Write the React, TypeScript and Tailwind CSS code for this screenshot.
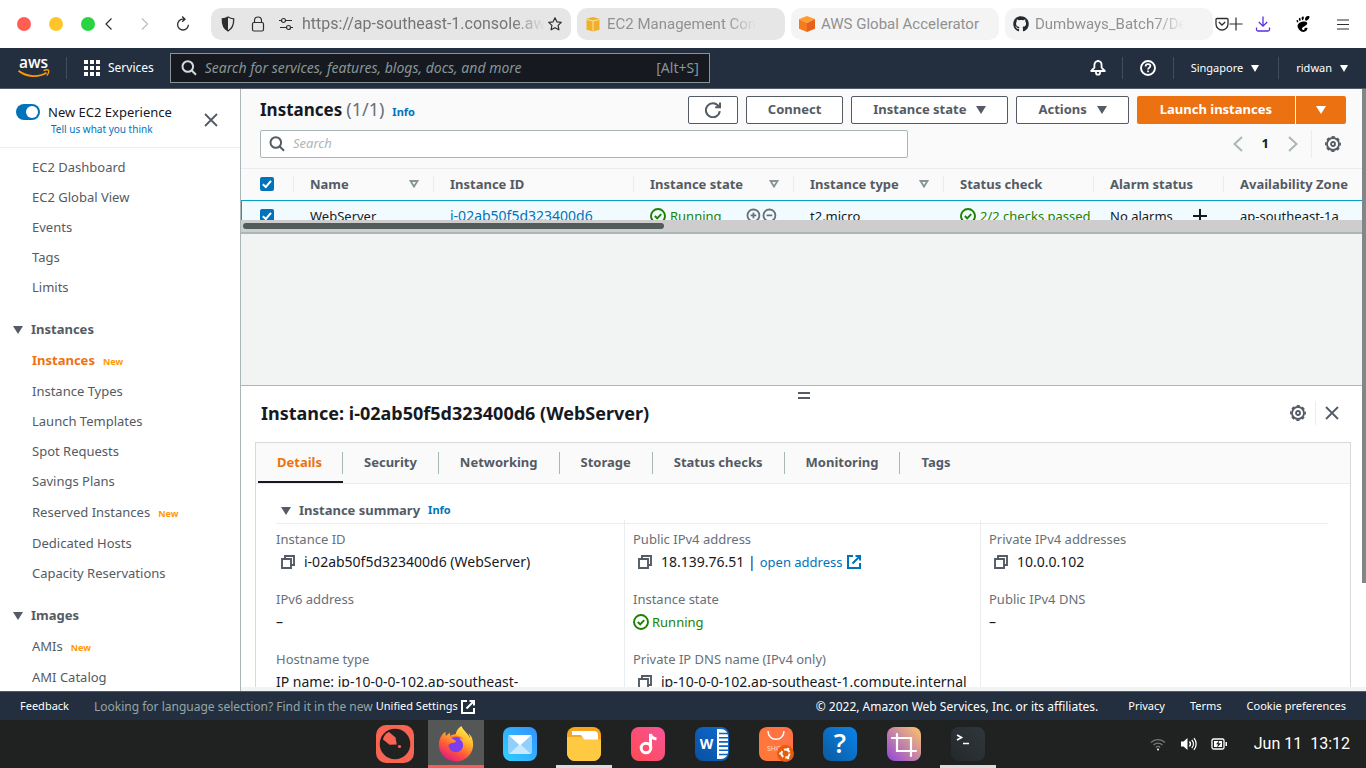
import type { ReactNode } from "react";
import { FaFirefoxBrowser, FaGithub } from "react-icons/fa";
import { SiGnome } from "react-icons/si";

/* ---------- Icons ---------- */

function Caret({ className = "h-2 w-2.5" }: { className?: string }) {
  return (
    <svg viewBox="0 0 10 8" preserveAspectRatio="none" className={"shrink-0 fill-current " + className} aria-hidden="true">
      <path d="M0 0h10L5 8z" />
    </svg>
  );
}

function SortIcon() {
  return (
    <svg viewBox="0 0 10 8" className="h-2 w-2.5 shrink-0 text-[#879596]" aria-hidden="true">
      <path d="M1.5 1h7L5 6.6z" fill="none" stroke="currentColor" strokeWidth="1.8" />
    </svg>
  );
}

function SearchIcon({ className = "" }: { className?: string }) {
  return (
    <svg viewBox="0 0 16 16" className={"size-4 shrink-0 " + className} fill="none" stroke="currentColor" strokeWidth="2" aria-hidden="true">
      <circle cx="6.800" cy="6.500" r="5.300" />
      <path d="M10.500 10.200 15 14.700" />
    </svg>
  );
}

function CloseIcon() {
  return (
    <svg viewBox="0 0 16 16" className="size-4" fill="none" stroke="currentColor" strokeWidth="1.8" aria-hidden="true">
      <path d="m2 2 12 12M14 2 2 14" />
    </svg>
  );
}

function GearIcon() {
  return (
    <svg viewBox="0 0 16 16" className="size-4" fill="none" stroke="currentColor" aria-hidden="true">
      <circle cx="8" cy="8" r="2" strokeWidth="1.8" />
      <circle cx="8" cy="8" r="6" strokeWidth="1.8" />
      <circle cx="8" cy="8" r="7.200" strokeWidth="1.500" strokeDasharray="3.200 2.455" strokeDashoffset="1.600" />
    </svg>
  );
}

function CopyIcon() {
  return (
    <svg viewBox="0 0 16 16" className="size-4 shrink-0 text-[#545b64]" fill="none" stroke="currentColor" strokeWidth="1.900" aria-hidden="true">
      <path d="M2 5h9v9H2z" />
      <path d="M5 5V2h9v9h-3" />
    </svg>
  );
}

function ExternalIcon() {
  return (
    <svg viewBox="0 0 16 16" className="size-4 shrink-0" fill="none" stroke="currentColor" strokeWidth="2" aria-hidden="true">
      <path d="M7 2H2v12h12V9" />
      <path d="M9.5 2H14v4.5M14 2 6.5 9.5" />
    </svg>
  );
}

function OkIcon() {
  return (
    <svg viewBox="0 0 16 16" className="size-4 shrink-0" fill="none" stroke="currentColor" strokeWidth="1.9" aria-hidden="true">
      <circle cx="8" cy="8" r="7" />
      <path d="m4.8 8 2.4 2.3 4-4.2" />
    </svg>
  );
}

function ZoomIcon({ plus }: { plus?: boolean }) {
  return (
    <svg viewBox="0 0 14 14" className="size-4 text-[#687078]" fill="none" stroke="currentColor" strokeWidth="1.600" aria-hidden="true">
      <circle cx="6.5" cy="6.5" r="5.2" />
      <path d="M10.500 10.500 13.500 13.500M4 6.500h5" />
      {plus && <path d="M6.500 4v5" />}
    </svg>
  );
}

/* ---------- Browser window bar ---------- */

function WindowDot({ className, label }: { className: string; label: string }) {
  return <button type="button" aria-label={label} className={"size-3.5 rounded-full " + className} />;
}

const fade = "[mask-image:linear-gradient(to_right,#000_78%,transparent_97%)]";

function BrowserTab({ icon, title, active, faded }: { icon: ReactNode; title: string; active?: boolean; faded?: boolean }) {
  return (
    <button
      type="button"
      className={
        "flex h-8 min-w-0 items-center gap-1.5 rounded-[10px] pr-6 pl-2 text-left text-[15px] text-[#919191] " +
        (active ? "bg-[#e6e6e6]" : "bg-[#f4f4f4]")
      }
    >
      {icon}
      <span className={"min-w-0 flex-1 whitespace-nowrap " + (faded ? fade : "")}>{title}</span>
    </button>
  );
}

function BrowserBar() {
  return (
    <header className="flex h-12 shrink-0 items-center bg-white font-['Roboto',sans-serif] text-[#2e2e2e]">
      <div className="flex w-[211px] shrink-0 items-center pl-[17px]">
        <div className="flex gap-[18px]">
          <WindowDot label="Close window" className="bg-[#ff5f52]" />
          <WindowDot label="Minimise window" className="bg-[#ffc52b]" />
          <WindowDot label="Maximise window" className="bg-[#28d43f]" />
        </div>
        <button type="button" aria-label="Back" className="ml-1.5">
          <svg viewBox="0 0 16 16" className="size-4" fill="none" stroke="currentColor" strokeWidth="1.2"><path d="M10.5 2.5 5 8l5.5 5.5" /></svg>
        </button>
        <button type="button" aria-label="Forward" className="ml-5 text-[#bdbdbd]">
          <svg viewBox="0 0 16 16" className="size-4" fill="none" stroke="currentColor" strokeWidth="1.2"><path d="M5 2.5 10.5 8 5 13.5" /></svg>
        </button>
        <button type="button" aria-label="Reload" className="ml-[22px]">
          <svg viewBox="0 0 16 16" className="size-4" fill="none" stroke="currentColor" strokeWidth="1.3">
            <path d="M9.5 3.2H7.6a5.4 5.4 0 1 0 5.8 5.600M7.200.600l2.800 2.600-2.800 2.600" />
          </svg>
        </button>
      </div>

      <div className="grid min-w-0 flex-1 grid-cols-[360fr_208fr_208fr_208fr] gap-1.5">
        <div className="flex h-8 min-w-0 items-center rounded-[10px] bg-[#e6e6e6] pr-2 pl-[9px]">
          <svg viewBox="0 0 16 16" className="size-4 shrink-0" aria-hidden="true">
            <path d="M8 1c2 1.200 4 1.700 5.700 1.800C13.900 8.500 12 12.800 8 15 4 12.800 2.100 8.500 2.300 2.800 4 2.700 6 2.200 8 1z" fill="none" stroke="currentColor" strokeWidth="1.3" />
            <path d="M8 1v14C4 12.800 2.100 8.500 2.300 2.800 4 2.700 6 2.200 8 1z" fill="currentColor" />
          </svg>
          <svg viewBox="0 0 16 16" className="ml-3.5 size-4 shrink-0" fill="none" stroke="currentColor" strokeWidth="1.200" aria-hidden="true">
            <rect x="2.500" y="6.500" width="11" height="8.500" rx="1.500" />
            <path d="M4.500 6.500V4.500a3.500 3.500 0 0 1 7 0v2" />
          </svg>
          <svg viewBox="0 0 16 16" className="ml-3 size-4 shrink-0" fill="none" stroke="currentColor" strokeWidth="1.200" aria-hidden="true">
            <path d="M1 4.500h2.500M7.500 4.500H14M2 11.500h6.500M12.500 11.500H15" />
            <circle cx="5.500" cy="4.500" r="2" />
            <circle cx="10.500" cy="11.500" r="2" />
          </svg>
          <input
            aria-label="Address"
            readOnly
            value="https://ap-southeast-1.console.aws"
            className="ml-2 min-w-0 flex-1 bg-transparent text-[16px] text-[#757575] outline-none [mask-image:linear-gradient(to_right,#000_86%,transparent_99%)]"
          />
          <button type="button" aria-label="Bookmark this page">
            <svg viewBox="0 0 16 16" className="size-4" fill="none" stroke="currentColor" strokeWidth="1.200" strokeLinejoin="round">
              <path d="m8 1.800 1.900 4 4.400.6-3.200 3 .8 4.400L8 11.700l-3.900 2.100.8-4.400-3.200-3 4.400-.6z" />
            </svg>
          </button>
        </div>

        <BrowserTab
          active
          faded
          title="EC2 Management Cons"
          icon={
            <svg viewBox="0 0 16 16" className="size-4 shrink-0" aria-hidden="true">
              <path d="m8 1 6.500 1.800v11L8 15.500l-6.500-1.700v-11z" fill="#f0b02a" />
              <path d="M1.500 3.400 8 5l6.500-1.600M8 5v10.500" stroke="#fae3a8" fill="none" />
            </svg>
          }
        />
        <BrowserTab
          title="AWS Global Accelerator"
          icon={
            <svg viewBox="0 0 16 16" className="size-4 shrink-0" aria-hidden="true">
              <path d="m8 0 8 3-8 4-8-4z" fill="#ff9d2e" />
              <path d="m0 3 8 4v9l-8-3.200z" fill="#f47b20" />
              <path d="m16 3-8 4v9l8-3.200z" fill="#e8601c" />
            </svg>
          }
        />
        <BrowserTab faded title="Dumbways_Batch7/Dev" icon={<FaGithub className="size-4 shrink-0 text-[#24292f]" />} />
      </div>

      <div className="flex w-[153px] shrink-0 items-center pl-0.5">
        <button type="button" aria-label="Save to Pocket">
          <svg viewBox="0 0 14 14" className="size-3.5" fill="none" stroke="currentColor" strokeWidth="1.300">
            <path d="M2 1.500h10a1 1 0 0 1 1 1V7A6 6 0 0 1 1 7V2.500a1 1 0 0 1 1-1z" />
            <path d="m3.800 5 3.200 3 3.200-3" />
          </svg>
        </button>
        <button type="button" aria-label="New tab">
          <svg viewBox="0 0 14 14" className="size-3.5" stroke="currentColor" strokeWidth="1.200"><path d="M7 .5v13M.5 7h13" /></svg>
        </button>
        <button type="button" aria-label="Downloads" className="ml-3 text-[#5b2ee0]">
          <svg viewBox="0 0 16 16" className="size-4" fill="none" stroke="currentColor" strokeWidth="1.300">
            <path d="M8 .5v9.500M3.800 6 8 10.200 12.200 6M1.500 11.500v2a1.500 1.500 0 0 0 1.500 1.500h10a1.500 1.500 0 0 0 1.500-1.500v-2" />
          </svg>
        </button>
        <button type="button" aria-label="GNOME extension" className="ml-6 text-black">
          <SiGnome className="size-4" />
        </button>
        <button type="button" aria-label="Open menu" className="ml-6">
          <svg viewBox="0 0 16 16" className="size-4" stroke="currentColor" strokeWidth="1.200"><path d="M2 4h12M2 8.500h12M2 13h12" /></svg>
        </button>
      </div>
    </header>
  );
}

/* ---------- AWS navigation ---------- */

function NavDivider() {
  return <span className="h-[22px] w-px bg-[#414d5c]" />;
}

function AwsNav() {
  return (
    <nav className="flex h-[41px] shrink-0 items-center border-b border-[#545b64] bg-[#232f3e] text-xs text-white">
      <a href="#home" aria-label="AWS home" className="ml-[18px]">
        <svg viewBox="0 0 32 22" className="h-[22px] w-8 overflow-visible">
          <text x="15.500" y="10.500" textAnchor="middle" fontFamily="'Open Sans', sans-serif" fontWeight="600" fontSize="15.500" fill="#fff">aws</text>
          <path d="M.5 13.800c8.500 6.600 20 6.800 28 2" fill="none" stroke="#f90" strokeWidth="1.900" />
          <path d="M25.500 13.600c2-.8 4.600-.9 5.200-.2.500.8-.4 3.600-2 5.200" fill="none" stroke="#f90" strokeWidth="1.300" />
        </svg>
      </a>
      <div className="ml-4 flex items-center gap-[17px]">
        <NavDivider />
        <button type="button" className="flex items-center gap-2">
          <svg viewBox="0 0 16 16" className="size-4" fill="currentColor" aria-hidden="true">
            {[0, 6, 12].map((y) => [0, 6, 12].map((x) => <rect key={`${x}-${y}`} x={x} y={y} width="4" height="4" />))}
          </svg>
          Services
        </button>
      </div>
      <label className="ml-4 flex h-[30px] w-[540px] items-center gap-2 border border-[#879596] bg-[#16191f] px-2.5">
        <SearchIcon className="text-[#d5dbdb]" />
        <input
          aria-label="Search services"
          placeholder="Search for services, features, blogs, docs, and more"
          className="min-w-0 flex-1 bg-transparent text-sm outline-none placeholder:text-[#879596] placeholder:italic"
        />
        <span className="text-sm text-[#879596]">[Alt+S]</span>
      </label>
      <div className="ml-auto flex items-center pr-[18px] text-[11px]">
        <button type="button" aria-label="Notifications" className="mr-4">
          <svg viewBox="0 0 16 16" className="size-4" fill="none" stroke="currentColor" strokeWidth="1.800" strokeLinejoin="round">
            <path d="M8 1.200c2.300 0 3.600 1.700 3.600 4v2.500L14.800 11H1.200l3.200-3.300V5.200c0-2.300 1.300-4 3.600-4zM6 11.500v1.200a2 2 0 0 0 4 0v-1.200M8 0v1.500" />
          </svg>
        </button>
        <NavDivider />
        <button type="button" aria-label="Help" className="mx-[17px]">
          <svg viewBox="0 0 16 16" className="size-4" fill="none" stroke="currentColor" strokeWidth="1.900">
            <circle cx="8" cy="8" r="7" />
            <path d="M5.600 6.400c0-1.500 1-2.300 2.400-2.300s2.400.8 2.400 2c0 1.700-2.400 1.600-2.400 3.400M8 10.500v1.700" strokeWidth="1.700" />
          </svg>
        </button>
        <NavDivider />
        <button type="button" className="mr-[19px] ml-[17px] flex items-center gap-2">Singapore <Caret className="h-[7px] w-2" /></button>
        <NavDivider />
        <button type="button" className="ml-[17px] flex items-center gap-2">ridwan <Caret className="h-[7px] w-2" /></button>
      </div>
    </nav>
  );
}

/* ---------- Sidebar ---------- */

type Item = { label: string; isNew?: boolean; current?: boolean };

function SideItems({ items }: { items: Item[] }) {
  return (
    <ul>
      {items.map((item) => (
        <li key={item.label} className={"flex items-center gap-2 pl-8 " + (item.isNew ? "h-8" : "h-[30px]")}>
          <a href="#nav" className={item.current ? "font-bold text-[#ec7211]" : "text-[#545b64]"}>{item.label}</a>
          {item.isNew && <span className="pt-0.5 text-[9px] font-bold text-[#ff9900]">New</span>}
        </li>
      ))}
    </ul>
  );
}

function SideSection({ title, items }: { title: string; items: Item[] }) {
  return (
    <section>
      <h2 className="pt-3">
        <button type="button" className="flex h-[30px] items-center gap-2 pl-[13px] font-bold text-[#545b64]">
          <Caret /> {title}
        </button>
      </h2>
      <SideItems items={items} />
    </section>
  );
}

function Sidebar() {
  return (
    <aside className="flex w-[241px] shrink-0 flex-col overflow-hidden border-r border-[#aab7b8] bg-white">
      <div className="flex h-[59px] shrink-0 items-start border-b border-[#eaeded] pt-[15px] pl-4">
        <label className="relative flex cursor-pointer">
          <input type="checkbox" role="switch" defaultChecked aria-label="New EC2 Experience" className="peer h-4 w-6 appearance-none rounded-full bg-[#0073bb]" />
          <span className="pointer-events-none absolute top-0.5 right-0.5 size-3 rounded-full bg-white" />
        </label>
        <div className="ml-2 flex flex-col">
          <span className="leading-4 text-[#16191f]">New EC2 Experience</span>
          <a href="#feedback" className="pl-[3px] text-[10px] leading-[18px] text-[#0073bb]">Tell us what you think</a>
        </div>
        <button type="button" aria-label="Close navigation" className="mt-2 ml-auto mr-[21px] text-[#545b64]"><CloseIcon /></button>
      </div>
      <div className="min-h-0 flex-1 overflow-hidden pt-[5px]">
        <SideItems items={[{ label: "EC2 Dashboard" }, { label: "EC2 Global View" }, { label: "Events" }, { label: "Tags" }, { label: "Limits" }]} />
        <SideSection
          title="Instances"
          items={[
            { label: "Instances", isNew: true, current: true },
            { label: "Instance Types" },
            { label: "Launch Templates" },
            { label: "Spot Requests" },
            { label: "Savings Plans" },
            { label: "Reserved Instances", isNew: true },
            { label: "Dedicated Hosts" },
            { label: "Capacity Reservations" },
          ]}
        />
        <SideSection title="Images" items={[{ label: "AMIs", isNew: true }, { label: "AMI Catalog" }]} />
      </div>
    </aside>
  );
}

/* ---------- Instances table ---------- */

function Check({ label }: { label: string }) {
  return (
    <label className="relative ml-[19px] flex size-3.5">
      <input type="checkbox" defaultChecked aria-label={label} className="size-3.5 appearance-none rounded-[2px] bg-[#0073bb]" />
      <svg viewBox="0 0 14 14" className="pointer-events-none absolute inset-0 size-3.5" fill="none" stroke="#fff" strokeWidth="2" aria-hidden="true">
        <path d="m2.800 7.200 3 2.800 5.200-6.200" />
      </svg>
    </label>
  );
}

function Button({ children, wide }: { children: ReactNode; wide?: boolean }) {
  return (
    <button type="button" className={"flex h-7 items-center gap-2.5 rounded-[2px] border border-[#545b64] bg-white font-bold text-[#545b64] " + (wide ? "px-[21px]" : "px-4")}>
      {children}
    </button>
  );
}

const columns = [
  { label: "Name", width: "w-[140px]", sort: true },
  { label: "Instance ID", width: "w-[200px]" },
  { label: "Instance state", width: "w-[160px]", sort: true },
  { label: "Instance type", width: "w-[150px]", sort: true },
  { label: "Status check", width: "w-[150px]" },
  { label: "Alarm status", width: "w-[130px]" },
  { label: "Availability Zone", width: "w-[160px]" },
];

function InstancesTable() {
  return (
    <section className="bg-[#fafafa] pt-[7px]">
      <div className="flex h-7 items-center gap-2 pr-5 pl-[19px]">
        <h1 className="flex flex-1 items-baseline text-[17px] leading-7 font-bold text-[#16191f]">
          Instances <span className="ml-1 text-[18px] font-normal text-[#687078]">(1/1)</span>
          <a href="#info" className="ml-2 text-[11px] text-[#0073bb]">Info</a>
        </h1>
        <Button>
          <svg viewBox="0 0 16 16" className="size-4" fill="none" stroke="currentColor" strokeWidth="2" aria-label="Refresh">
            <path d="M14.800 9.200A7 7 0 1 1 13.600 4.200M15 .5V5.300h-4.800" />
          </svg>
        </Button>
        <Button wide>Connect</Button>
        <Button wide>Instance state <Caret /></Button>
        <Button wide>Actions <Caret /></Button>
        <div className="flex gap-px">
          <button type="button" className="h-7 rounded-l-[2px] bg-[#ec7211] px-[23px] font-bold text-white">Launch instances</button>
          <button type="button" aria-label="More launch options" className="flex h-7 w-[50px] items-center justify-center rounded-r-[2px] bg-[#ec7211] text-white"><Caret /></button>
        </div>
      </div>

      <div className="mt-1.5 flex items-center justify-between pr-5 pl-[19px]">
        <label className="flex h-7 w-[648px] items-center gap-2 rounded-[2px] border border-[#aab7b8] bg-white px-2">
          <SearchIcon className="text-[#545b64]" />
          <input aria-label="Search instances" placeholder="Search" className="min-w-0 flex-1 bg-transparent outline-none placeholder:text-[#aab7b8] placeholder:italic" />
        </label>
        <div className="flex items-center">
          <button type="button" aria-label="Previous page" className="text-[#aab7b8]">
            <svg viewBox="0 0 16 16" className="size-4" fill="none" stroke="currentColor" strokeWidth="2"><path d="M12 1 4.500 8l7.500 7" /></svg>
          </button>
          <span className="mx-4 font-bold text-[#16191f]">1</span>
          <button type="button" aria-label="Next page" className="text-[#aab7b8]">
            <svg viewBox="0 0 16 16" className="size-4" fill="none" stroke="currentColor" strokeWidth="2"><path d="m4 1 7.500 7L4 15" /></svg>
          </button>
          <span className="mr-[13px] ml-2.5 h-7 w-px bg-[#eaeded]" />
          <button type="button" aria-label="Preferences" className="mr-[5px] text-[#545b64]"><GearIcon /></button>
        </div>
      </div>

      <div className="mt-2.5 h-[52px] overflow-hidden border-t border-[#eaeded]">
        <table className="w-[1143px] table-fixed border-collapse text-left whitespace-nowrap">
          <thead>
            <tr className="h-[31px] text-[#545b64]">
              <th className="w-[53px] p-0">
                <div className="flex h-4 items-center border-r border-[#eaeded]"><Check label="Select all" /></div>
              </th>
              {columns.map((c) => (
                <th key={c.label} className={"p-0 font-bold " + c.width}>
                  <div className="flex h-4 items-center justify-between border-r border-[#eaeded] pr-3.5 pl-4">
                    {c.label}
                    {c.sort && <SortIcon />}
                  </div>
                </th>
              ))}
            </tr>
          </thead>
          <tbody>
            <tr className="h-8 border-t border-[#00a1c9] bg-[#f1faff] text-[#16191f] shadow-[inset_1px_0_#00a1c9]">
              <td className="p-0"><Check label="Select WebServer" /></td>
              <td className="p-0 pl-4">WebServer</td>
              <td className="p-0 pl-4"><a href="#instance" className="text-sm text-[#0073bb]">i-02ab50f5d323400d6</a></td>
              <td className="p-0 pl-4">
                <div className="flex items-center">
                  <span className="flex items-center gap-1 text-[#1d8102]"><OkIcon /> Running</span>
                  <button type="button" aria-label="Filter for value" className="ml-6"><ZoomIcon plus /></button>
                  <button type="button" aria-label="Filter out value"><ZoomIcon /></button>
                </div>
              </td>
              <td className="p-0 pl-4">t2.micro</td>
              <td className="p-0 pl-4">
                <span className="flex items-center gap-1 text-[#1d8102]"><OkIcon /> 2/2 checks passed</span>
              </td>
              <td className="p-0 pl-4">
                <div className="flex items-center gap-5">
                  No alarms
                  <button type="button" aria-label="Add alarm">
                    <svg viewBox="0 0 14 14" className="size-3.5" stroke="currentColor" strokeWidth="2"><path d="M7 0v14M0 7h14" /></svg>
                  </button>
                </div>
              </td>
              <td className="p-0 pl-4">ap-southeast-1a</td>
            </tr>
          </tbody>
        </table>
      </div>
      <div className="h-[14px] border-b-2 border-[#aab7b8] bg-[#cdcdcd] px-0.5 pt-[3px]">
        <div className="h-1.5 w-[37.6%] rounded-full bg-[#545b5b]" />
      </div>
    </section>
  );
}

/* ---------- Detail panel ---------- */

const tabs = ["Details", "Security", "Networking", "Storage", "Status checks", "Monitoring", "Tags"];

function Field({ label, children }: { label: string; children: ReactNode }) {
  return (
    <div className="h-[60px]">
      <dt className="leading-[22px] text-[#687078]">{label}</dt>
      <dd className="flex h-6 items-center text-sm whitespace-nowrap text-[#16191f]">{children}</dd>
    </div>
  );
}

function Copyable({ children }: { children: ReactNode }) {
  return (
    <span className="flex items-center gap-2 pl-1">
      <button type="button" aria-label="Copy"><CopyIcon /></button>
      <span className="flex items-center gap-1">{children}</span>
    </span>
  );
}

function DetailPanel() {
  return (
    <section className="relative flex h-[306px] shrink-0 flex-col border-t border-[#aab7b8] bg-white">
      <button type="button" aria-label="Resize panel" className="absolute top-1 left-1/2 -translate-x-1/2 text-[#545b64]">
        <svg viewBox="0 0 12 12" className="size-3" stroke="currentColor" strokeWidth="2"><path d="M0 3h12M0 8h12" /></svg>
      </button>
      <header className="flex h-14 shrink-0 items-center pr-[26px] pb-0.5 pl-5">
        <h2 className="flex-1 text-[18px] font-bold text-[#16191f]">Instance: i-02ab50f5d323400d6 (WebServer)</h2>
        <button type="button" aria-label="Panel preferences" className="mr-[9px] text-[#545b64]"><GearIcon /></button>
        <span className="h-6 w-px bg-[#eaeded]" />
        <button type="button" aria-label="Close panel" className="ml-2 text-[#545b64]"><CloseIcon /></button>
      </header>
      <div className="mr-[15px] ml-3.5 flex min-h-0 flex-1 flex-col overflow-hidden border-x border-t border-[#d5dbdb]">
        <div role="tablist" className="flex h-[41px] shrink-0 items-stretch border-b border-[#eaeded] bg-[#fafafa] pl-0.5">
          {tabs.map((tab, i) => (
            <button
              key={tab}
              type="button"
              role="tab"
              aria-selected={i === 0}
              className={"flex items-center border-y-2 border-t-transparent font-bold " + (i === 0 ? "border-b-[#16191f] text-[#ec7211]" : "border-b-transparent text-[#545b64]")}
            >
              <span
                className={
                  "flex h-[22px] items-center " +
                  (i === 0 ? "pr-5 pl-[19px] " : "px-[21px] ") +
                  (i < tabs.length - 1 ? "border-r border-[#aab7b8]" : "")
                }
              >
                {tab}
              </span>
            </button>
          ))}
        </div>
        <div className="flex min-h-0 flex-1 flex-col overflow-hidden pt-4 pr-[22px] pl-5">
          <h3 className="flex h-6 shrink-0 items-center border-b border-[#eaeded] pb-0.5 pl-[5px] font-bold text-[#545b64]">
            <button type="button" className="flex items-center gap-2"><Caret /> Instance summary</button>
            <a href="#info" className="ml-2 text-[11px] text-[#0073bb]">Info</a>
          </h3>
          <dl className="-mx-2 -mt-1 grid grid-cols-3">
            <div className="px-2 pt-2">
              <Field label="Instance ID"><Copyable>i-02ab50f5d323400d6 (WebServer)</Copyable></Field>
              <Field label="IPv6 address">–</Field>
              <Field label="Hostname type">IP name: ip-10-0-0-102.ap-southeast-</Field>
            </div>
            <div className="border-l border-[#eaeded] px-2 pt-2">
              <Field label="Public IPv4 address">
                <Copyable>
                  18.139.76.51 | <a href="#open" className="flex items-center gap-1 text-[13px] text-[#0073bb]">open address <ExternalIcon /></a>
                </Copyable>
              </Field>
              <Field label="Instance state"><span className="flex items-center gap-[3px] text-[13px] text-[#1d8102]"><OkIcon /> Running</span></Field>
              <Field label="Private IP DNS name (IPv4 only)"><Copyable>ip-10-0-0-102.ap-southeast-1.compute.internal</Copyable></Field>
            </div>
            <div className="border-l border-[#eaeded] px-2 pt-2">
              <Field label="Private IPv4 addresses"><Copyable>10.0.0.102</Copyable></Field>
              <Field label="Public IPv4 DNS">–</Field>
            </div>
          </dl>
        </div>
      </div>
      <div className="h-1 shrink-0 bg-[#f2f3f3]" />
    </section>
  );
}

/* ---------- Footer and dock ---------- */

function ConsoleFooter() {
  return (
    <footer className="flex h-[29px] shrink-0 items-center border-t border-[#545b64] bg-[#232f3e] px-5 pt-px text-[11px] whitespace-nowrap text-white">
      <a href="#feedback">Feedback</a>
      <p className="ml-[25px] flex items-center gap-[3px] text-xs text-[#95a5a6]">
        Looking for language selection? Find it in the new
        <a href="#settings" className="flex items-center gap-0.5 text-[11px] text-white">Unified Settings <ExternalIcon /></a>
      </p>
      <p className="ml-auto text-xs">© 2022, Amazon Web Services, Inc. or its affiliates.</p>
      <a href="#privacy" className="ml-[30px]">Privacy</a>
      <a href="#terms" className="ml-[25px]">Terms</a>
      <a href="#cookies" className="ml-[25px]">Cookie preferences</a>
    </footer>
  );
}

function DockItem({ label, className = "w-14", bar, children }: { label: string; className?: string; bar?: string; children: ReactNode }) {
  return (
    <button type="button" aria-label={label} className={"relative flex h-12 items-center justify-center " + className}>
      {children}
      {bar && <span className={"absolute inset-x-0 bottom-0 h-[3px] " + bar} />}
    </button>
  );
}

function Tile({ from, to, id, children }: { from: string; to: string; id: string; children: ReactNode }) {
  return (
    <svg viewBox="0 0 36 36" className="size-9">
      <defs>
        <linearGradient id={id} x1="0" y1="1" x2="1" y2="0">
          <stop offset="0" stopColor={from} />
          <stop offset="1" stopColor={to} />
        </linearGradient>
      </defs>
      <rect x="1" y="1" width="34" height="34" rx="8" fill={`url(#${id})`} />
      {children}
    </svg>
  );
}

function Dock() {
  return (
    <div className="grid h-12 shrink-0 grid-cols-[1fr_auto_1fr] bg-[#202121] font-['Roboto',sans-serif] text-white">
      <div />
      <div className="flex gap-2">
        <DockItem label="Activities" className="w-[50px]">
          <svg viewBox="0 0 38 38" className="size-[38px]">
            <rect width="38" height="38" rx="10" fill="#f96352" />
            <circle cx="19" cy="19" r="15.300" fill="#202121" />
            <path d="M7 14.500Q8 9 13 7l6.500 5.500 1.300 7-7.300.300z" fill="#f96352" />
            <circle cx="23.500" cy="21.500" r="1.600" fill="#f96352" />
          </svg>
        </DockItem>
        <DockItem label="Firefox" className="w-14 bg-[#555656]" bar="bg-[#f65d55]">
          <svg viewBox="0 0 36 36" className="size-9">
            <defs>
              <linearGradient id="fox" x1=".8" y1="0" x2=".25" y2="1">
                <stop offset="0" stopColor="#fff44f" />
                <stop offset=".35" stopColor="#ffb52e" />
                <stop offset=".65" stopColor="#ff5a36" />
                <stop offset="1" stopColor="#e31587" />
              </linearGradient>
            </defs>
            <circle cx="18" cy="20" r="12" fill="#ff7a2d" />
            <circle cx="18" cy="19" r="8" fill="#7b3ff0" />
            <FaFirefoxBrowser x="0" y="0" size={36} style={{ fill: "url(#fox)" }} />
          </svg>
        </DockItem>
        <DockItem label="Mail">
          <Tile id="mail" from="#2fd0ff" to="#3391ff">
            <rect x="6" y="9" width="24" height="19" rx="2" fill="#8fd0ff" />
            <path d="m7 28 11-10 11 10z" fill="#c9e9ff" />
            <path d="M6.500 9h23L18 19.500z" fill="#fff" />
          </Tile>
        </DockItem>
        <DockItem label="Files" bar="bg-[#dcdcdc]">
          <Tile id="files" from="#f9a825" to="#f6a51c">
            <path d="M6 5h22a4 4 0 0 1 4 4v6H19l-4-6H6z" fill="#fff" />
            <path d="M1 11h12c4 0 3 2.500 7 2.500h15V27a8 8 0 0 1-8 8H9a8 8 0 0 1-8-8z" fill="#ffca41" />
          </Tile>
        </DockItem>
        <DockItem label="Music">
          <Tile id="music" from="#ff4a50" to="#f7549c">
            <circle cx="16" cy="22" r="4.800" fill="none" stroke="#fff" strokeWidth="3" />
            <path d="M20.500 22V8c.5 3 2 4.500 6 5" fill="none" stroke="#fff" strokeWidth="3" />
          </Tile>
        </DockItem>
        <DockItem label="Writer">
          <Tile id="word" from="#0a4fa0" to="#0d6ed1">
            <path d="M23 3h4a7 7 0 0 1 7 7v16a7 7 0 0 1-7 7h-4z" fill="#fff" />
            <path d="M25 7.500h9M25 11.700h9M25 15.900h9M25 20.100h9M25 24.300h9M25 28.500h9" stroke="#0d63bf" strokeWidth="1.600" />
            <text x="12.500" y="23" textAnchor="middle" fontFamily="'Open Sans', sans-serif" fontWeight="700" fontSize="14" fill="#fff">W</text>
          </Tile>
        </DockItem>
        <DockItem label="Software">
          <Tile id="shop" from="#ff7a36" to="#ff7048">
            <path d="M10 5c0 11 16 11 16 0" fill="none" stroke="#fff" strokeWidth="1.500" />
            <text x="9" y="25" fontFamily="'Open Sans', sans-serif" fontSize="7" fill="#ffe0d0">SHOP</text>
            <circle cx="27.500" cy="27.500" r="8.500" fill="#ea5a0b" />
            <circle cx="27.500" cy="27.500" r="4" fill="none" stroke="#fff" strokeWidth="2" strokeDasharray="6.400 2" />
            <circle cx="22.500" cy="27.500" r="1.300" fill="#fff" />
            <circle cx="30" cy="23" r="1.300" fill="#fff" />
            <circle cx="30" cy="32" r="1.300" fill="#fff" />
          </Tile>
        </DockItem>
        <DockItem label="Help">
          <Tile id="help" from="#0a5aa0" to="#0a84ea">
            <text x="18" y="27" textAnchor="middle" fontFamily="'Open Sans', sans-serif" fontWeight="600" fontSize="27" fill="#fff">?</text>
          </Tile>
        </DockItem>
        <DockItem label="Screenshot">
          <Tile id="crop" from="#8d46dd" to="#ffc56b">
            <path d="M11 8v17h19M6 12h19v18" fill="none" stroke="#fff" strokeWidth="2.200" strokeLinecap="round" />
          </Tile>
        </DockItem>
        <DockItem label="Terminal" bar="bg-[#dcdcdc]">
          <Tile id="term" from="#23282b" to="#30373b">
            <path d="m7 9 4.500 2.500L7 14M13 17.500h6" fill="none" stroke="#fff" strokeWidth="1.700" />
          </Tile>
        </DockItem>
      </div>
      <div className="flex items-center justify-end pr-4">
        <svg viewBox="0 0 16 16" className="size-4 text-[#777]" fill="none" stroke="currentColor" strokeWidth="1.200" aria-label="Wi-Fi">
          <path d="M1 6.500a10 10 0 0 1 14 0M3.500 9a6.500 6.500 0 0 1 9 0M5.800 11.500a3.200 3.200 0 0 1 4.400 0" />
          <circle cx="8" cy="13.500" r="1" fill="#fff" stroke="none" />
        </svg>
        <svg viewBox="0 0 18 16" className="ml-3.5 h-4 w-[18px]" fill="none" stroke="currentColor" strokeWidth="1.300" aria-label="Volume">
          <path d="M1 5.500h2.500L7.500 2v12l-4-3.500H1z" fill="currentColor" stroke="none" />
          <path d="M9.500 5.500a4 4 0 0 1 0 5M11.800 3.800a6.500 6.500 0 0 1 0 8.400M14 2.200a9 9 0 0 1 0 11.600" />
        </svg>
        <svg viewBox="0 0 18 16" className="ml-3 h-4 w-[18px]" aria-label="Battery charging">
          <rect x="2" y="3" width="12" height="10" rx="1.500" fill="none" stroke="#fff" strokeWidth="1.300" />
          <path d="M15.500 6h1.500v4h-1.500zM4 5h8v6H4z" fill="#fff" />
          <path d="M9.500 4 6 8.300h2L7 12l4-4.800H8.500z" fill="#202121" />
        </svg>
        <time className="ml-[26px] text-[16px] whitespace-pre">Jun 11  13:12</time>
      </div>
    </div>
  );
}

export default function App() {
  return (
    <div className="flex h-screen flex-col overflow-hidden font-['Noto_Sans',sans-serif] text-[13px]">
      <BrowserBar />
      <AwsNav />
      <div className="flex min-h-0 flex-1">
        <Sidebar />
        <main className="relative flex min-w-0 flex-1 flex-col justify-between overflow-hidden bg-[#f2f3f3]">
          <InstancesTable />
          <DetailPanel />
          <span className="absolute top-0 right-0 h-[82%] w-1 bg-[#818686]" />
        </main>
      </div>
      <ConsoleFooter />
      <Dock />
    </div>
  );
}
